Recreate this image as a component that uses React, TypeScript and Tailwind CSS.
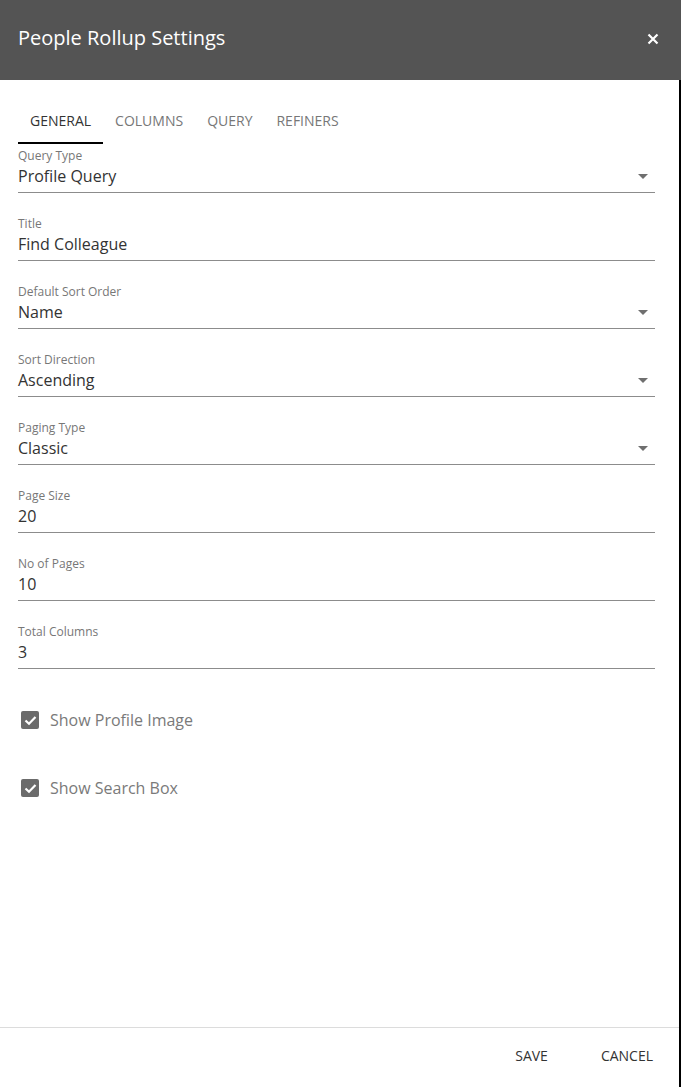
import React from "react";

const fields = [
  { label: "Query Type", value: "Profile Query", select: true },
  { label: "Title", value: "Find Colleague", select: false },
  { label: "Default Sort Order", value: "Name", select: true },
  { label: "Sort Direction", value: "Ascending", select: true },
  { label: "Paging Type", value: "Classic", select: true },
  { label: "Page Size", value: "20", select: false },
  { label: "No of Pages", value: "10", select: false },
  { label: "Total Columns", value: "3", select: false },
];

const tabs = ["GENERAL", "COLUMNS", "QUERY", "REFINERS"];

function Caret() {
  return (
    <svg width="10" height="5" viewBox="0 0 10 5" className="shrink-0">
      <path d="M0 0 L10 0 L5 5 Z" fill="#6f6f6f" />
    </svg>
  );
}

function Check() {
  return (
    <div className="w-[18px] h-[18px] rounded-[2px] bg-[#6b6b6b] flex items-center justify-center">
      <svg width="13" height="11" viewBox="0 0 13 11">
        <path d="M1.5 5.5 L5 8.8 L11.5 2" fill="none" stroke="#fff" strokeWidth="2.2" />
      </svg>
    </div>
  );
}

export default function App() {
  return (
    <div className="w-[681px] h-[1087px] flex flex-col bg-white" style={{ fontFamily: '"Open Sans", sans-serif' }}>
      <div className="h-20 shrink-0 bg-[#545454] flex items-center justify-between pl-[18px] pr-[22px]">
        <h1 className="text-[20px] text-white leading-none -mt-[4px]">People Rollup Settings</h1>
        <svg width="12" height="12" viewBox="0 0 12 12" className="-mt-[2px]">
          <path d="M1.5 1.5 L10.5 10.5 M10.5 1.5 L1.5 10.5" stroke="#fff" strokeWidth="2.2" />
        </svg>
      </div>

      <div className="flex-1 flex flex-col border-r-2 border-black">
        <div className="flex-1 pl-[18px] pr-6 pt-5">
          <div className="flex h-11">
            {tabs.map((t, i) => (
              <div
                key={t}
                className={
                  "px-3 flex items-center text-[14px] border-b-2 pb-[1px] " +
                  (i === 0 ? "text-[#333] border-black" : "text-[#777] border-transparent")
                }
              >
                {t}
              </div>
            ))}
          </div>

          <div className="mt-[5px] flex flex-col gap-6">
            {fields.map((f) => (
              <div key={f.label} className="border-b border-[#8c8c8c] pb-1">
                <div className="text-[12px] leading-[14px] text-[#777] pb-[1px]">{f.label}</div>
                <div className="flex items-center justify-between h-6 pr-[7px]">
                  <span className="text-[16px] text-[#333]">{f.value}</span>
                  {f.select && <Caret />}
                </div>
              </div>
            ))}
          </div>

          <div className="mt-[29px] flex flex-col gap-6 pl-[3px]">
            {["Show Profile Image", "Show Search Box"].map((c) => (
              <div key={c} className="h-11 flex items-center gap-[11px]">
                <Check />
                <span className="text-[16px] text-[#7a7a7a]">{c}</span>
              </div>
            ))}
          </div>
        </div>

        <div className="h-[60px] shrink-0 border-t border-[#dcdcdc] flex items-center justify-end pr-[10px] pb-1">
          <button className="px-4 text-[14px] text-[#333] leading-none">SAVE</button>
          <button className="ml-[21px] px-4 text-[14px] text-[#333] leading-none">CANCEL</button>
        </div>
      </div>
    </div>
  );
}
